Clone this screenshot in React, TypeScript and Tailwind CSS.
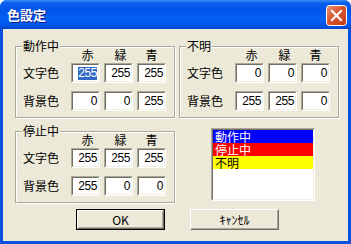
const jp = "font-['Noto_Sans_CJK_JP','Noto_Sans_CJK_SC',sans-serif]";

function Num({ v, sel }: { v: string; sel?: boolean }) {
    return (
        <div className="h-[20px] w-[29px] border border-b-white border-l-[#aca899] border-r-white border-t-[#aca899]">
            <div className="flex h-full w-full items-center justify-end border border-b-[#f1efe2] border-l-[#716f64] border-r-[#f1efe2] border-t-[#716f64] bg-white pr-[1px] font-['Liberation_Sans',sans-serif] text-[12px] leading-[13px] tracking-[-0.4px] text-black">
                {sel ? <span className="bg-[#316ac5] text-white">{v}</span> : v}
            </div>
        </div>
    );
}

function ColorGroup({ title, fg, bg, selFirst }: { title: string; fg: string[]; bg: string[]; selFirst?: boolean }) {
    return (
        <div className="relative h-[72px] w-[160px] border border-[#aca899] shadow-[inset_1px_1px_0_#fff,1px_1px_0_#fff]">
            <span className="absolute left-[6px] top-[-8px] bg-[#ece9d8] px-[1px] text-[12px] leading-[14px]">{title}</span>
            <div className="flex pl-[55px] pt-[2px] text-[12px] leading-[12px]">
                <span className="w-[33px] text-center">赤</span>
                <span className="w-[33px] text-center">緑</span>
                <span className="w-[29px] text-center">青</span>
            </div>
            <div className="mt-[2px] flex flex-col gap-[8px] pl-[7px]">
                <div className="flex items-center">
                    <span className="w-[48px] text-[12px]">文字色</span>
                    <div className="flex gap-[4px]">
                        {fg.map((v, i) => (
                            <Num key={i} v={v} sel={selFirst && i === 0} />
                        ))}
                    </div>
                </div>
                <div className="flex items-center">
                    <span className="w-[48px] text-[12px]">背景色</span>
                    <div className="flex gap-[4px]">
                        {bg.map((v, i) => (
                            <Num key={i} v={v} />
                        ))}
                    </div>
                </div>
            </div>
        </div>
    );
}

function Btn({ label, def }: { label: string; def?: boolean }) {
    return (
        <div className={def ? 'h-[21px] w-[89px] border border-black' : 'h-[21px] w-[89px]'}>
            <div className="h-full w-full border border-b-[#716f64] border-l-white border-r-[#716f64] border-t-white">
                <div className="flex h-full w-full items-center justify-center border border-b-[#aca899] border-l-[#ece9d8] border-r-[#aca899] border-t-[#ece9d8] text-[12px] leading-[12px]">
                    {label}
                </div>
            </div>
        </div>
    );
}

export default function App() {
    return (
        <div className={`h-[244px] w-[351px] bg-white text-black ${jp}`}>
            <div className="flex h-full flex-col rounded-t-[7px] bg-[#0750e0]">
                <div className="flex h-[29px] rounded-t-[7px] bg-[linear-gradient(to_bottom,#3d8ff8_0%,#0a5fee_10%,#0055ea_35%,#0260f6_65%,#0157ec_85%,#0046cf_100%)] pl-[7px] pr-[4px]">
                    <span className="mt-[6px] text-[13px] font-bold leading-[17px] text-white [text-shadow:1px_1px_0_#0a1883]">色設定</span>
                    <div className="ml-auto mt-[5px] h-[21px] w-[21px]">
                        <svg width="21" height="21" viewBox="0 0 21 21">
                            <defs>
                                <linearGradient id="cl" x1="0" y1="0" x2="1" y2="1">
                                    <stop offset="0" stopColor="#eb9a7f" />
                                    <stop offset="0.45" stopColor="#d9562f" />
                                    <stop offset="1" stopColor="#c23a14" />
                                </linearGradient>
                            </defs>
                            <rect x="0.5" y="0.5" width="20" height="20" rx="3" fill="url(#cl)" stroke="#fff" />
                            <path d="M6 6 L15 15 M15 6 L6 15" stroke="#fff" strokeWidth="2.2" strokeLinecap="square" />
                        </svg>
                    </div>
                </div>
                <div className="mx-[3px] mb-[3px] flex-1 bg-[#ece9d8] pl-[12px] pt-[17px]">
                    <div className="flex gap-[4px]">
                        <ColorGroup title="動作中" fg={['255', '255', '255']} bg={['0', '0', '255']} selFirst />
                        <ColorGroup title="不明" fg={['0', '0', '0']} bg={['255', '255', '0']} />
                    </div>
                    <div className="mt-[10px] flex items-start gap-[4px]">
                        <div className="mt-[3px]">
                            <ColorGroup title="停止中" fg={['255', '255', '255']} bg={['255', '0', '0']} />
                        </div>
                        <div className="ml-[32px] h-[73px] w-[104px] border border-b-white border-l-[#aca899] border-r-white border-t-[#aca899]">
                            <div className="h-full w-full border border-b-[#f1efe2] border-l-[#716f64] border-r-[#f1efe2] border-t-[#716f64] bg-white text-[12px] leading-[13px]">
                                <div className="h-[13px] bg-[#0000ff] pl-[2px] text-white">動作中</div>
                                <div className="h-[13px] bg-[#ff0000] pl-[2px] text-white">停止中</div>
                                <div className="h-[13px] bg-[#ffff00] pl-[2px] text-black">不明</div>
                            </div>
                        </div>
                    </div>
                    <div className="mt-[6px] flex gap-[25px] pl-[61px]">
                        <Btn label="OK" def />
                        <Btn label="ｷｬﾝｾﾙ" />
                    </div>
                </div>
            </div>
        </div>
    );
}
